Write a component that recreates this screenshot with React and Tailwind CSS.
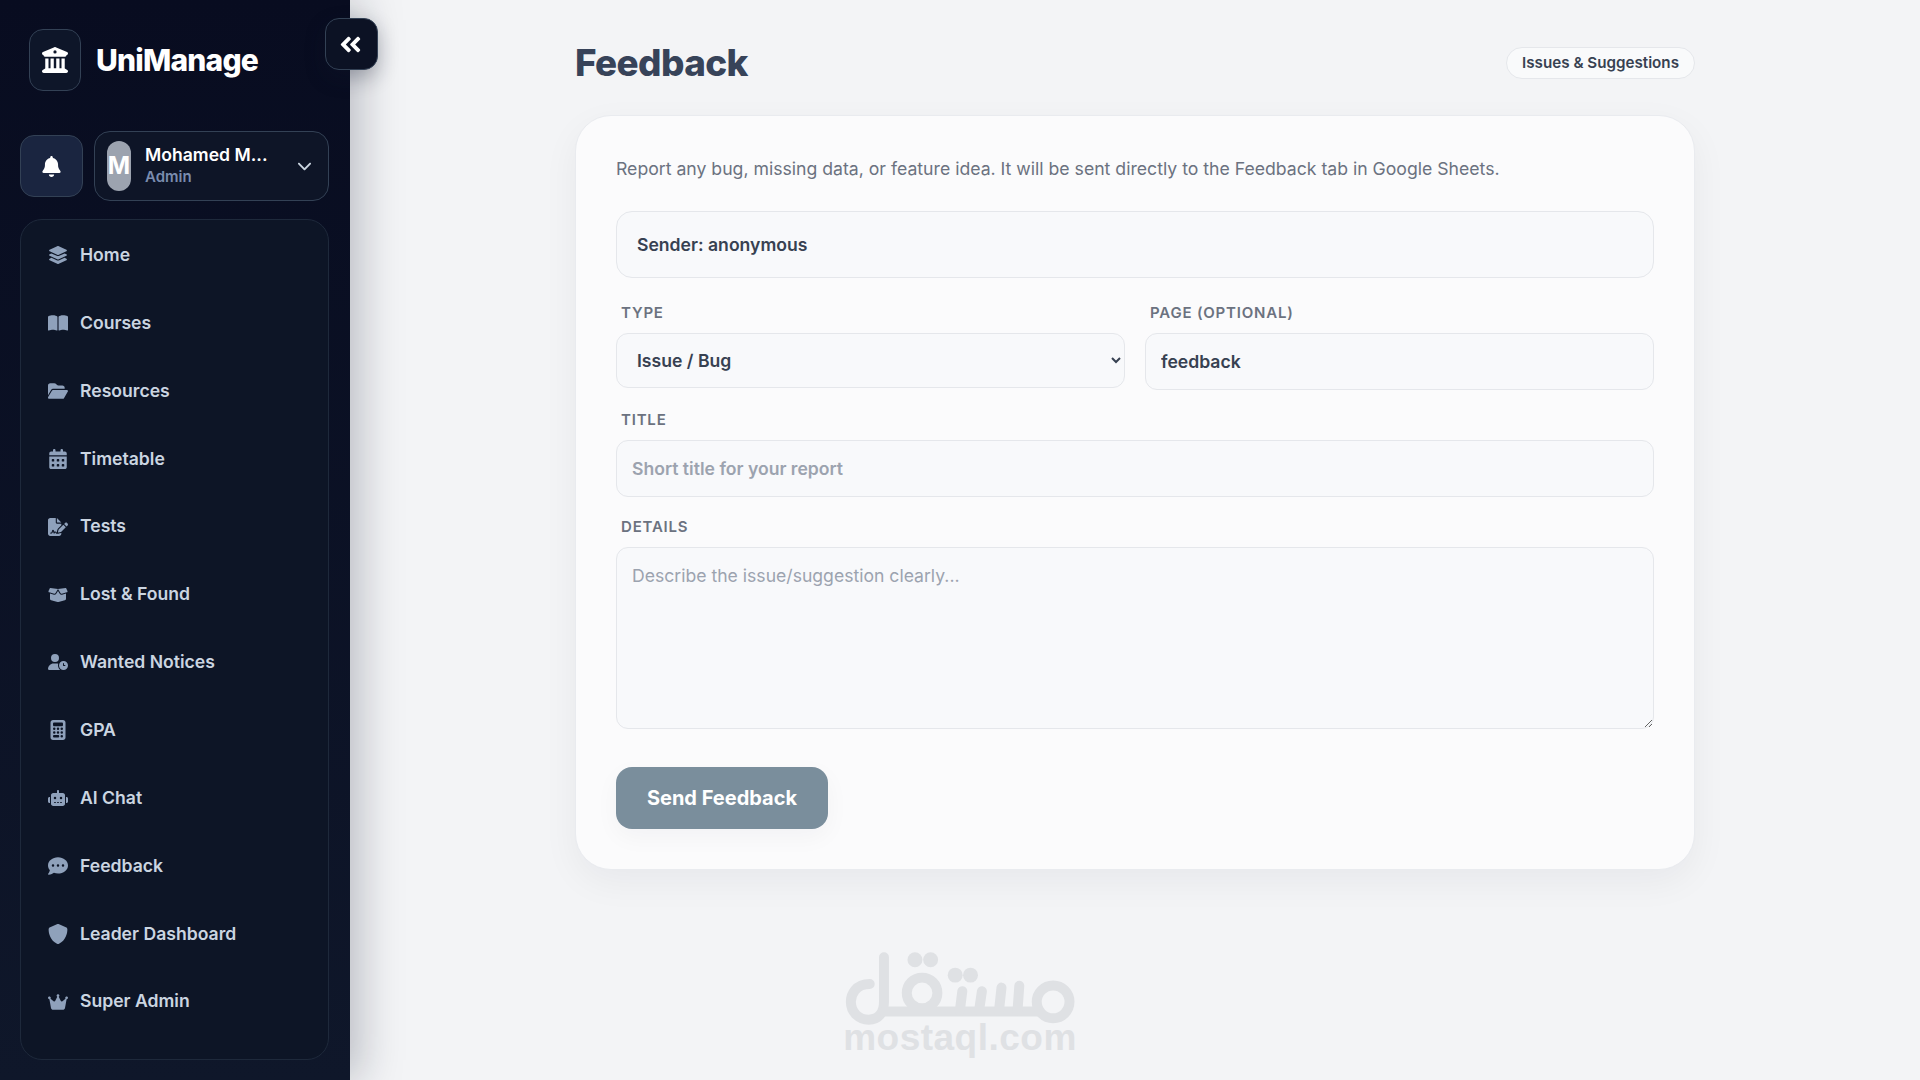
import { FaAngleDoubleLeft } from 'react-icons/fa';
import { FaBell, FaBookOpen, FaBoxOpen, FaBuildingColumns, FaCalculator, FaCalendarDays, FaChevronDown, FaCommentDots, FaCrown, FaFileSignature, FaFolderOpen, FaLayerGroup, FaRobot, FaShield, FaUserClock } from 'react-icons/fa6';

const navItems = [
  { icon: FaLayerGroup, label: 'Home' },
  { icon: FaBookOpen, label: 'Courses' },
  { icon: FaFolderOpen, label: 'Resources' },
  { icon: FaCalendarDays, label: 'Timetable' },
  { icon: FaFileSignature, label: 'Tests' },
  { icon: FaBoxOpen, label: 'Lost & Found' },
  { icon: FaUserClock, label: 'Wanted Notices' },
  { icon: FaCalculator, label: 'GPA' },
  { icon: FaRobot, label: 'AI Chat' },
  { icon: FaCommentDots, label: 'Feedback' },
  { icon: FaShield, label: 'Leader Dashboard' },
  { icon: FaCrown, label: 'Super Admin' },
];

const Label = ({ children }) => (
  <div className="px-[5px] mb-3 h-[17px] text-[15px] leading-[17px] font-semibold tracking-[0.8px] text-[#6b7280]">{children}</div>
);

const fieldClass = 'w-full rounded-[12px] border border-[#e5e7eb] bg-[#f8f9fb] text-[17.6px] text-[#374151] outline-none placeholder:text-[#9ca3af]';

const Sidebar = () => (
  <aside className="relative z-10 w-[350px] h-full shrink-0 flex flex-col pl-5 pr-[21px] pb-5 bg-gradient-to-b from-[#080c20] to-[#0f172a] shadow-[10px_0_40px_rgba(15,23,42,0.25)]">
    <div className="flex gap-[15px] pl-[9px] pt-[29px] h-[131px] items-start">
      <div className="w-[52px] h-[62px] rounded-[14px] border border-[#334155] bg-[#0e1629] flex items-center justify-center text-white">
        <FaBuildingColumns className="w-[26px] h-[26px]" />
      </div>
      <div className="text-[30px] leading-[62px] font-extrabold text-white tracking-[-0.8px]">UniManage</div>
    </div>

    <div className="flex items-center gap-[11px] h-[70px]">
      <div className="w-[63px] h-[62px] rounded-[14px] border border-[#334155] bg-[#1a2540] flex items-center justify-center text-white">
        <FaBell className="h-[21px] w-auto" />
      </div>
      <div className="w-[235px] h-[70px] rounded-[16px] border border-[#334155] bg-[#0e1527] flex items-center pl-[12px] pr-[16px]">
        <div className="w-[24px] h-[50px] rounded-full bg-[#9ca3af] flex items-center justify-center text-white text-[24px] font-bold shrink-0">M</div>
        <div className="ml-[14px] -mt-[2px] flex-1">
          <div className="text-[17.6px] leading-[22px] font-semibold text-white">Mohamed M...</div>
          <div className="text-[15px] leading-[21px] font-semibold text-[#7a8cae]">Admin</div>
        </div>
        <FaChevronDown className="w-[15px] h-[15px] -mt-[1px] text-[#cbd5e1]" />
      </div>
    </div>

    <nav className="mt-[18px] flex-1 rounded-[22px] border border-[#1e293b] bg-[#0d1526] pt-[1.4px] pl-[26px]">
      {navItems.map((item) => (
        <div key={item.label} className="h-[67.85px] flex items-center">
          <div className="w-[22px] flex justify-center shrink-0">
            <item.icon className="h-[20px] w-auto shrink-0 text-[#8fa1bb]" />
          </div>
          <span className="ml-[11px] text-[17.6px] font-semibold text-[#cbd5e1]">{item.label}</span>
        </div>
      ))}
    </nav>
  </aside>
);

const Watermark = () => (
  <div className="absolute left-[845px] top-[952px] w-[230px] flex flex-col items-center text-[#dfe1e4]">
    <svg viewBox="797 785 643 205" className="w-[230px] h-[73px]" fill="none" stroke="currentColor" strokeWidth="28" strokeLinecap="round">
      <path d="M865 875C825 875 812 905 812 925C812 955 835 975 862 975C890 975 905 955 905 925L905 800" />
      <circle cx="1012" cy="900" r="43" />
      <path d="M905 952L1340 952" />
      <path d="M1125 895L1118 950M1180 895L1172 950M1235 885L1228 950M1285 880L1280 950" />
      <circle cx="1380" cy="925" r="46" />
      <g fill="currentColor" stroke="none">
        <circle cx="992" cy="807" r="21" />
        <circle cx="1036" cy="807" r="21" />
        <circle cx="1105" cy="850" r="21" />
        <circle cx="1148" cy="850" r="21" />
      </g>
    </svg>
    <div className="-mt-[6px] text-[37px] leading-[38px] font-bold font-['Liberation_Sans',sans-serif] tracking-[0.5px]">mostaql.com</div>
  </div>
);

export default function App() {
  return (
    <div className="relative w-full h-[1080px] overflow-hidden flex bg-[#f3f4f6] font-['Inter',sans-serif]">
      <Sidebar />

      {/* collapse button sits over the sidebar edge */}
      <button className="absolute z-20 left-[325px] top-[18px] w-[53px] h-[52px] pr-[2px] rounded-[14px] border border-[#334155] bg-[#0c1224] flex items-center justify-center text-white shadow-[0_8px_20px_rgba(15,23,42,0.3)]">
        <FaAngleDoubleLeft className="w-[25px] h-[25px]" />
      </button>

      <main className="flex-1">
        <div className="w-[1120px] mx-auto">
          <div className="h-[115px] flex items-start justify-between pt-[38px]">
            <h1 className="text-[36.8px] leading-[50px] font-extrabold text-[#374359] tracking-[-0.6px]">Feedback</h1>
            <div className="h-[32px] mt-[9px] px-[15px] flex items-center rounded-full border border-[#e5e7eb] bg-[#f9fafb] text-[15.2px] font-semibold text-[#374151]">Issues &amp; Suggestions</div>
          </div>

          <div className="rounded-[36px] border border-[#e9ebef] bg-[#fbfbfc] px-[40px] pt-[40px] pb-[40px] shadow-[0_12px_36px_rgba(15,23,42,0.05)]">
            <p className="text-[17.65px] leading-[26px] text-[#6b7280]">Report any bug, missing data, or feature idea. It will be sent directly to the Feedback tab in Google Sheets.</p>

            <div className="mt-[29px] h-[67px] pt-[1px] rounded-[16px] border border-[#e5e7eb] bg-[#f8f9fb] px-5 flex items-center text-[17.6px] font-semibold text-[#374151]">Sender: anonymous</div>

            <div className="mt-[26px] grid grid-cols-2 gap-5">
              <div>
                <Label>TYPE</Label>
                <select className={`${fieldClass} h-[55px] pl-4 pr-[9px] font-semibold`} defaultValue="Issue / Bug">
                  <option>Issue / Bug</option>
                  <option>Suggestion</option>
                  <option>Missing Data</option>
                </select>
              </div>
              <div>
                <Label>PAGE (OPTIONAL)</Label>
                <input className={`${fieldClass} h-[57px] px-[15px] font-semibold`} defaultValue="feedback" />
              </div>
            </div>

            <div className="mt-[21px]">
              <Label>TITLE</Label>
              <input className={`${fieldClass} h-[57px] px-[15px] font-semibold`} placeholder="Short title for your report" />
            </div>

            <div className="mt-[21px]">
              <Label>DETAILS</Label>
              <textarea className={`${fieldClass} block h-[182px] px-[15px] py-[15px] font-normal`} placeholder="Describe the issue/suggestion clearly..." />
            </div>

            <button className="mt-[38px] block w-[212px] h-[62px] rounded-[16px] bg-[#7a8e9c] text-[20px] font-bold text-white shadow-[0_8px_24px_rgba(15,23,42,0.04)]">Send Feedback</button>
          </div>
        </div>
      </main>

      <Watermark />
    </div>
  );
}
